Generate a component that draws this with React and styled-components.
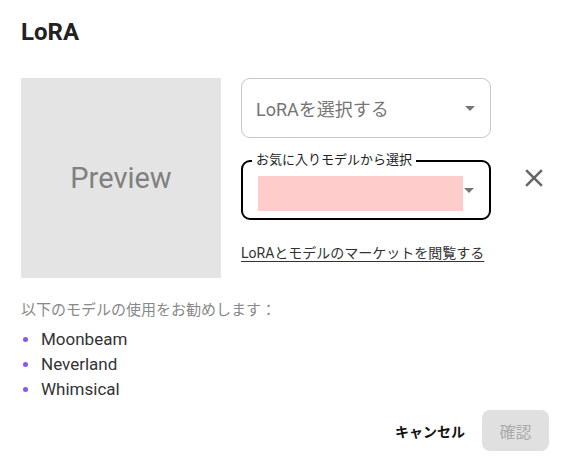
import React from 'react';
import styled, { createGlobalStyle } from 'styled-components';

const GlobalStyle = createGlobalStyle`
  body {
    margin: 0;
    background: #fff;
    font-family: Roboto, 'Noto Sans CJK JP', sans-serif;
    color: #222;
  }
`;

const ArrowDropDown = () => (
  <svg width="24" height="24" viewBox="0 0 24 24" fill="#757575">
    <path d="M7 10l5 5 5-5z" />
  </svg>
);

const CloseIcon = () => (
  <svg width="30" height="30" viewBox="0 0 24 24" fill="#666">
    <path d="M19 6.41 17.59 5 12 10.59 6.41 5 5 6.41 10.59 12 5 17.59 6.41 19 12 13.41 17.59 19 19 17.59 13.41 12z" />
  </svg>
);

const models = ['Moonbeam', 'Neverland', 'Whimsical'];

const App = () => {
  return (
    <>
      <GlobalStyle />
      <Dialog>
        <Title>LoRA</Title>
        <Content>
          <Preview>Preview</Preview>
          <Fields>
            <Select>
              <Placeholder>LoRAを選択する</Placeholder>
              <ArrowDropDown />
            </Select>
            <SelectRow>
              <Select $focused>
                <Legend>お気に入りモデルから選択</Legend>
                <Masked />
                <ArrowDropDown />
              </Select>
              <CloseButton aria-label="close">
                <CloseIcon />
              </CloseButton>
            </SelectRow>
            <MarketLink href="#">LoRAとモデルのマーケットを閲覧する</MarketLink>
          </Fields>
        </Content>
        <Hint>以下のモデルの使用をお勧めします：</Hint>
        <ModelList>
          {models.map((m) => (
            <ModelItem key={m}>
              <Dot />
              {m}
            </ModelItem>
          ))}
        </ModelList>
        <Footer>
          <CancelButton>キャンセル</CancelButton>
          <ConfirmButton disabled>確認</ConfirmButton>
        </Footer>
      </Dialog>
    </>
  );
};

export default App;

const Dialog = styled.div`
  width: 576px;
  height: 470px;
  box-sizing: border-box;
  padding: 16px 27px 0 21px;
`;

const Title = styled.h2`
  margin: 0;
  font-size: 24px;
  line-height: 32px;
  font-weight: 700;
  color: #222;
`;

const Content = styled.div`
  display: flex;
  gap: 20px;
  margin-top: 30px;
`;

const Preview = styled.div`
  width: 200px;
  height: 200px;
  flex-shrink: 0;
  background: #e4e4e4;
  display: flex;
  align-items: center;
  justify-content: center;
  font-size: 29px;
  color: #808080;
`;

const Fields = styled.div`
  display: flex;
  flex-direction: column;
  gap: 22px;
`;

const SelectRow = styled.div`
  display: flex;
  align-items: flex-start;
`;

const Select = styled.div`
  position: relative;
  width: 250px;
  height: 60px;
  box-sizing: border-box;
  display: flex;
  align-items: center;
  justify-content: space-between;
  padding: 0 8px 0 14px;
  border: ${({ $focused }) => ($focused ? '2px solid #000' : '1px solid #c8c8c8')};
  border-radius: 9px;
  padding-left: ${({ $focused }) => ($focused ? '15px' : '14px')};
`;

const Placeholder = styled.span`
  font-size: 18px;
  color: #757575;
`;

const Legend = styled.span`
  position: absolute;
  left: 9px;
  top: -10px;
  padding: 0 4px;
  background: #fff;
  font-size: 13px;
  line-height: 16px;
  color: #222;
`;

const Masked = styled.div`
  flex-shrink: 0;
  width: 205px;
  height: 35px;
  margin: 7px -6px 0 0;
  background: #ffcccc;
`;

const CloseButton = styled.button`
  margin: 3px 0 0 28px;
  padding: 0;
  border: 0;
  background: none;
  display: flex;
  cursor: pointer;
`;

const MarketLink = styled.a`
  margin-top: 1px;
  font-size: 14px;
  line-height: 20px;
  color: #333;
  text-decoration: underline;
  text-underline-offset: 3px;
`;

const Hint = styled.p`
  margin: 21px 0 0;
  font-size: 15px;
  line-height: 22px;
  color: #888;
`;

const ModelList = styled.ul`
  list-style: none;
  margin: 6px 0 0;
  padding: 0;
`;

const ModelItem = styled.li`
  display: flex;
  align-items: center;
  gap: 13px;
  font-size: 17px;
  line-height: 25px;
  color: #333;
`;

const Dot = styled.span`
  width: 5px;
  height: 5px;
  margin-left: 2px;
  border-radius: 50%;
  background: #8b55f0;
`;

const Footer = styled.div`
  display: flex;
  justify-content: flex-end;
  align-items: center;
  gap: 9px;
  margin-top: 8px;
`;

const CancelButton = styled.button`
  border: 0;
  background: none;
  padding: 6px 8px;
  font-family: inherit;
  font-size: 14px;
  font-weight: 700;
  color: #111;
  cursor: pointer;
`;

const ConfirmButton = styled.button`
  width: 67px;
  height: 41px;
  border: 0;
  border-radius: 8px;
  background: #e0e0e0;
  font-family: inherit;
  font-size: 16px;
  color: #aaa;
`;
